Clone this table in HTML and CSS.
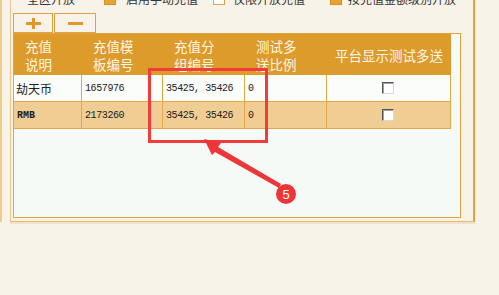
FILE: index.html
```html
<!DOCTYPE html>
<html lang="zh">
<head>
<meta charset="utf-8">
<title>充值设置</title>
<link rel="stylesheet" href="styles.css">
</head>
<body>
<div class="page">
  <div class="frame">
    <div class="toolbar">
      <span class="tl-label first">全区开放</span>
      <span class="tcb on cb1"></span><span class="tl-label">启用手动充值</span>
      <span class="tcb off cb2"></span><span class="tl-label">仅限开放充值</span>
      <span class="tcb on cb3"></span><span class="tl-label">按充值金额级别开放</span>
    </div>
    <div class="panel">
      <div class="btns">
        <button class="tbtn add" type="button"><svg width="15" height="11" viewBox="0 0 15 11"><rect x="0" y="4" width="15" height="3" fill="#E3962A"/><rect x="6" y="0" width="3" height="11" fill="#E3962A"/></svg></button>
        <button class="tbtn del" type="button"><svg width="15" height="3" viewBox="0 0 15 3"><rect x="0" y="0" width="15" height="3" fill="#E3962A"/></svg></button>
      </div>
      <div class="box">
        <div class="grid head">
          <div class="hc">充值<br>说明</div>
          <div class="hc">充值模<br>板编号</div>
          <div class="hc">充值分<br>组编号</div>
          <div class="hc">测试多<br>送比例</div>
          <div class="hc last">平台显示测试多送</div>
        </div>
        <div class="grid row">
          <div class="c cn">劫天币</div>
          <div class="c num">1657976</div>
          <div class="c num">35425, 35426</div>
          <div class="c num">0</div>
          <div class="c chk"><span class="cb"></span></div>
        </div>
        <div class="grid row alt">
          <div class="c num en">RMB</div>
          <div class="c num">2173260</div>
          <div class="c num">35425, 35426</div>
          <div class="c num">0</div>
          <div class="c chk"><span class="cb"></span></div>
        </div>
      </div>
    </div>
  </div>
</div>
<div class="mark"></div>
<svg class="arrow" width="499" height="295" viewBox="0 0 499 295">
  <polygon points="204,139 221,143 218,147 281,184 279,188 215,152 212,155" fill="#EE3538"/>
  <circle cx="286" cy="194" r="10" fill="#EE3538"/>
  <text x="286" y="198.5" text-anchor="middle" class="num5">5</text>
</svg>
</body>
</html>
```

FILE: styles.css
```css
html, body {
  margin: 0;
  padding: 0;
}
body {
  width: 499px;
  height: 295px;
  overflow: hidden;
  background: #F7F3E9;
  font-family: "Noto Sans CJK SC", "Liberation Sans", sans-serif;
  color: #333;
  position: relative;
}
.page {
  border-left: 2px solid #EFCB8C;
  padding-left: 8px;
  width: 465px;
}
.frame {
  box-sizing: border-box;
  width: 465px;
  border-left: 1px solid #EDC68A;
  border-right: 2px solid #E2A13A;
  border-bottom: 1px solid #EDBA62;
  box-shadow: 0 2px 1px #EFE3CD;
  padding: 0 0 3px 2px;
}
.toolbar {
  display: flex;
  align-items: flex-end;
  height: 14px;
  margin-top: -8px;
  font-size: 12px;
  line-height: 14px;
}
.tl-label {
  white-space: nowrap;
  color: #333;
}
.tl-label.first { margin-left: 14px; }
.tcb {
  box-sizing: border-box;
  width: 12px;
  height: 12px;
  margin-bottom: 1px;
  flex: none;
}
.tcb.on { background: #E8A133; border: 1px solid #D89022; }
.tcb.off { background: #fff; border: 1px solid #E2A24A; }
.cb1 { margin-left: 29px; margin-right: 10px; }
.cb2 { margin-left: 15px; margin-right: 8px; }
.cb3 { margin-left: 25px; margin-right: 6px; }

.panel { display: flex; flex-direction: column; }
.btns {
  display: flex;
  gap: 1px;
  margin-top: 7px;
}
.tbtn {
  box-sizing: border-box;
  height: 20px;
  border: 1px solid #E2A244;
  background: #F7F3E9;
  padding: 0;
  margin: 0;
  display: flex;
  align-items: center;
  justify-content: center;
}
.tbtn.add { width: 40px; }
.tbtn.del { width: 42px; }
.tbtn svg { display: block; }

.box {
  box-sizing: border-box;
  width: 448px;
  height: 185px;
  border: 1px solid #E3A43F;
  background: #F6FAF6;
}
.grid {
  display: grid;
  grid-template-columns: 68px 81px 82px 82px 124px;
  width: 437px;
}
.head {
  background: #DD9B2C;
  height: 41px;
  color: #FFF6E4;
  font-size: 13.5px;
  line-height: 18px;
  align-items: center;
}
.hc { padding-left: 11px; }
.hc.last { padding-left: 0; text-align: center; }

.row { background: #FBFDFA; }
.row.alt { background: #F0CD93; }
.c {
  box-sizing: border-box;
  height: 27px;
  border-right: 1px solid #E4A74A;
  border-bottom: 1px solid #E4A74A;
  padding-left: 3px;
  display: flex;
  align-items: center;
  color: #222;
}
.cn { font-size: 12px; padding-left: 2px; }
.num {
  font-family: "Liberation Mono", "DejaVu Sans Mono", monospace;
  font-size: 10px;
  letter-spacing: -0.4px;
}
.en { font-weight: bold; letter-spacing: 0; }
.chk { justify-content: center; padding-left: 0; }
.cb {
  box-sizing: border-box;
  width: 12px;
  height: 12px;
  background: #fff;
  border-top: 1px solid #555;
  border-left: 1px solid #555;
  border-right: 1px solid #D8D8D8;
  border-bottom: 1px solid #D8D8D8;
  box-shadow: inset 1px 1px 0 #A0A0A0;
  margin-right: 2px;
}

.mark {
  position: absolute;
  left: 148px;
  top: 68px;
  width: 120px;
  height: 75px;
  box-sizing: border-box;
  border: 3px solid #F23B3B;
}
.arrow {
  position: absolute;
  left: 0;
  top: 0;
  pointer-events: none;
}
.num5 {
  font-family: "Liberation Sans", sans-serif;
  font-size: 13px;
  fill: #fff;
}
```
